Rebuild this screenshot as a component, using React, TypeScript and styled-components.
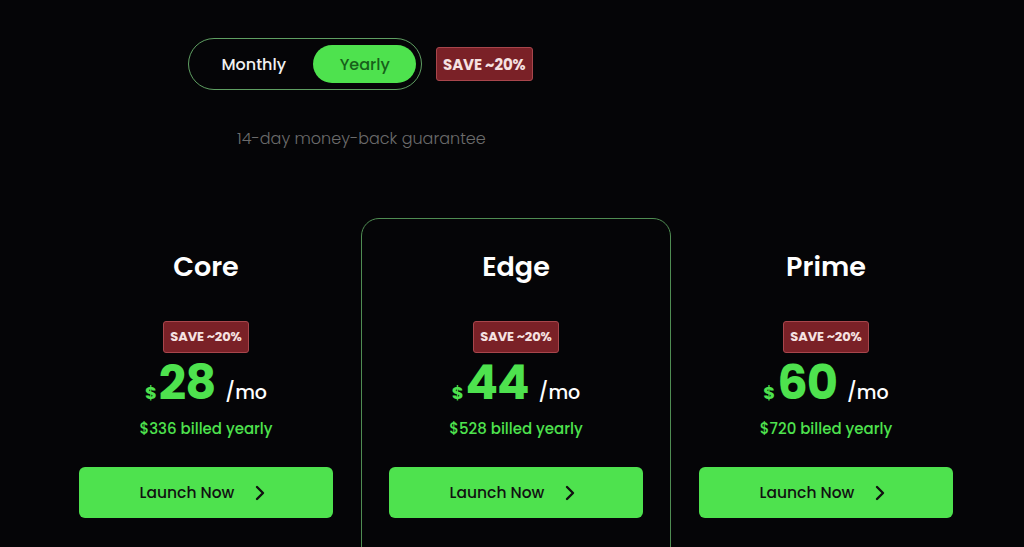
import React, { useState } from "react";
import styled, { createGlobalStyle } from "styled-components";
import { ChevronRight } from "lucide-react";

const Global = createGlobalStyle`
  html, body { margin: 0; padding: 0; background: #050507; overflow: hidden; }
  body { font-family: "Poppins", Inter, "Noto Sans", sans-serif; color: #fff; }
  * { box-sizing: border-box; }
`;

const Page = styled.div`
  width: 1024px;
  height: 547px;
  overflow: hidden;
  background: #050507;
`;

const Header = styled.div`
  padding: 38px 0 0 188px;
  display: flex;
  flex-direction: column;
`;

const ToggleRow = styled.div`
  display: flex;
  align-items: center;
  gap: 14px;
`;

const Toggle = styled.div`
  width: 234px;
  height: 52px;
  border: 1.5px solid #5f9f62;
  border-radius: 26px;
  padding: 5px;
  display: flex;
  align-items: center;
`;

const Segment = styled.button<{ $active?: boolean; $w: number }>`
  width: ${(p) => p.$w}px;
  height: 38px;
  border: none;
  border-radius: 19px;
  background: ${(p) => (p.$active ? "#4ee24e" : "transparent")};
  color: ${(p) => (p.$active ? "#17601a" : "#f2f2f2")};
  font-family: inherit;
  font-size: 16px;
  font-weight: 500;
  cursor: pointer;
  padding: 0;
`;

const SaveBadge = styled.span<{ $small?: boolean }>`
  display: inline-flex;
  align-items: center;
  justify-content: center;
  height: ${(p) => (p.$small ? 32 : 34)}px;
  padding: 0 6px;
  background: #7a2127;
  border: 1px solid #a8464c;
  border-radius: 3px;
  color: #f6e2e2;
  font-size: ${(p) => (p.$small ? 13 : 15)}px;
  font-weight: 700;
  letter-spacing: -0.1px;
`;

const Guarantee = styled.p`
  margin: 37px 0 0 49px;
  font-size: 16px;
  font-weight: 300;
  color: #6c6c6c;
  line-height: 24px;
`;

const Plans = styled.div`
  display: grid;
  grid-template-columns: repeat(3, 310px);
  padding-left: 51px;
  margin-top: 67px;
`;

const Card = styled.div<{ $featured?: boolean }>`
  display: flex;
  flex-direction: column;
  align-items: center;
  padding: 32px 27px 60px;
  min-height: 380px;
  border: 1px solid ${(p) => (p.$featured ? "#4f8c52" : "transparent")};
  border-radius: 18px;
`;

const Title = styled.h3`
  margin: 0 0 38px;
  font-size: 27px;
  line-height: 32px;
  font-weight: 600;
  color: #fff;
`;

const PriceRow = styled.div`
  margin-top: 4px;
  display: flex;
  align-items: baseline;
  height: 52px;
`;

const Currency = styled.span`
  font-size: 18px;
  font-weight: 700;
  color: #4ee24e;
  margin-right: 2px;
`;

const Amount = styled.span`
  font-size: 48px;
  line-height: 52px;
  font-weight: 700;
  color: #4ee24e;
  letter-spacing: -1px;
`;

const Per = styled.span`
  font-size: 19px;
  font-weight: 500;
  color: #fff;
  margin-left: 10px;
`;

const Billed = styled.div`
  margin-top: 10px;
  font-size: 15px;
  line-height: 20px;
  font-weight: 500;
  color: #4ee24e;
`;

const Launch = styled.button`
  margin-top: 28px;
  width: 100%;
  height: 51px;
  border: none;
  border-radius: 6px;
  background: #4ee24e;
  color: #111;
  font-family: inherit;
  font-size: 15.5px;
  font-weight: 500;
  display: flex;
  align-items: center;
  justify-content: center;
  gap: 14px;
  cursor: pointer;
`;

const plans = [
  { name: "Core", price: 28, yearly: 336 },
  { name: "Edge", price: 44, yearly: 528, featured: true },
  { name: "Prime", price: 60, yearly: 720 },
];

export default function App() {
  const [yearly, setYearly] = useState(true);
  return (
    <Page>
      <Global />
      <Header>
        <ToggleRow>
          <Toggle>
            <Segment $w={120} $active={!yearly} onClick={() => setYearly(false)}>
              Monthly
            </Segment>
            <Segment $w={103} $active={yearly} onClick={() => setYearly(true)}>
              Yearly
            </Segment>
          </Toggle>
          <SaveBadge>SAVE ~20%</SaveBadge>
        </ToggleRow>
        <Guarantee>14-day money-back guarantee</Guarantee>
      </Header>
      <Plans>
        {plans.map((p) => (
          <Card key={p.name} $featured={p.featured}>
            <Title>{p.name}</Title>
            <SaveBadge $small>SAVE ~20%</SaveBadge>
            <PriceRow>
              <Currency>$</Currency>
              <Amount>{p.price}</Amount>
              <Per>/mo</Per>
            </PriceRow>
            <Billed>${p.yearly} billed yearly</Billed>
            <Launch>
              Launch Now
              <ChevronRight size={24} strokeWidth={2.4} />
            </Launch>
          </Card>
        ))}
      </Plans>
    </Page>
  );
}
